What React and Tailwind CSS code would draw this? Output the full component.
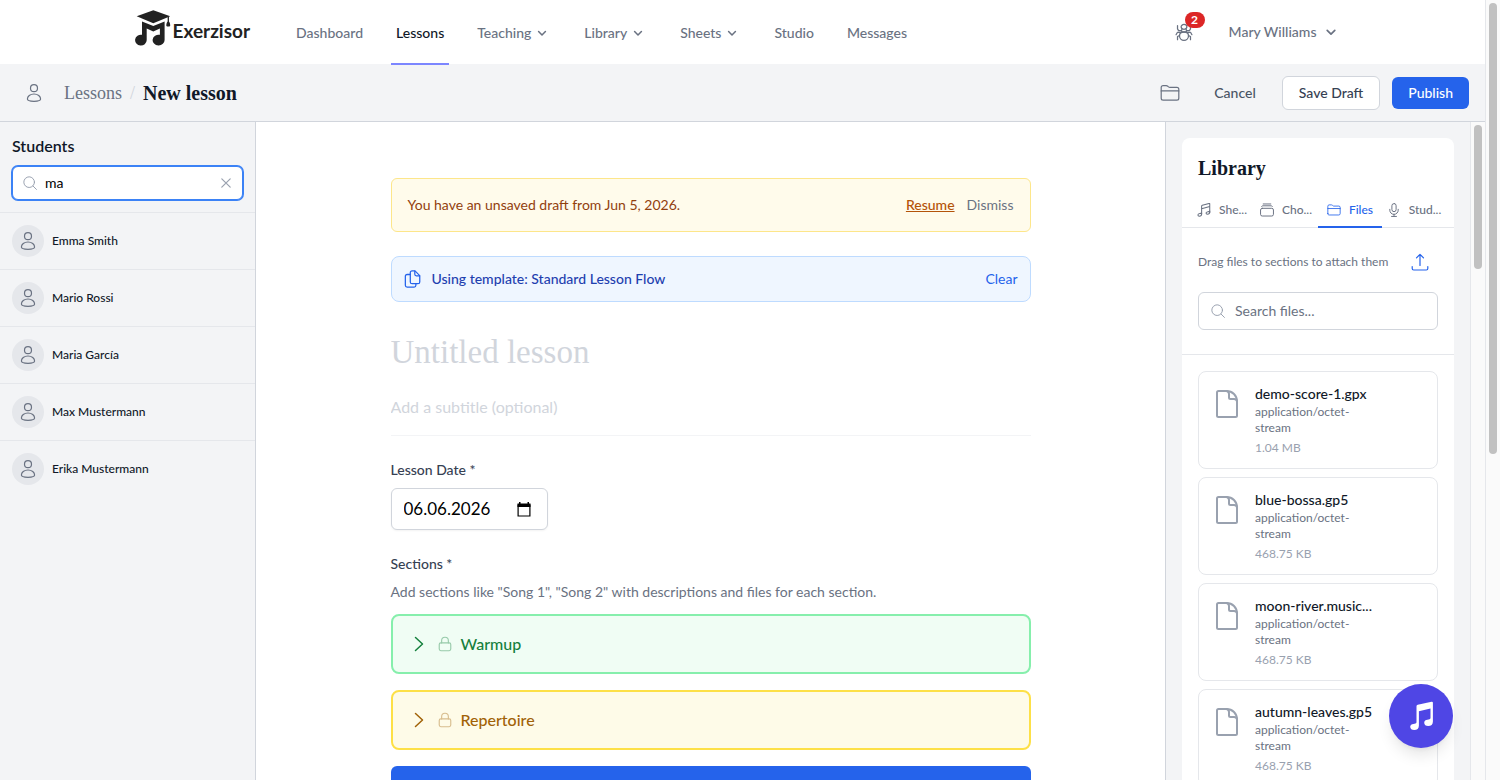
import React, { useState } from 'react';

const students = ['Emma Smith', 'Mario Rossi', 'Maria García', 'Max Mustermann', 'Erika Mustermann'];

const files = [
  { name: 'demo-score-1.gpx', type: 'application/octet-stream', size: '1.04 MB' },
  { name: 'blue-bossa.gp5', type: 'application/octet-stream', size: '468.75 KB' },
  { name: 'moon-river.music...', type: 'application/octet-stream', size: '468.75 KB' },
  { name: 'autumn-leaves.gp5', type: 'application/octet-stream', size: '468.75 KB' }
];

const navItems = [
  { label: 'Dashboard' },
  { label: 'Lessons', active: true },
  { label: 'Teaching', menu: true },
  { label: 'Library', menu: true },
  { label: 'Sheets', menu: true },
  { label: 'Studio' },
  { label: 'Messages' }
];

const serif = "font-['Liberation_Serif',serif]";

function Icon({ className, children, width = 1.2 }) {
  return (
    <svg
      viewBox="0 0 20 20"
      fill="none"
      stroke="currentColor"
      strokeWidth={width}
      strokeLinecap="round"
      strokeLinejoin="round"
      className={`shrink-0 ${className}`}
      aria-hidden="true"
    >
      {children}
    </svg>
  );
}

function PersonIcon({ className }) {
  return (
    <Icon className={className}>
      <circle cx="10" cy="5.2" r="3.5" />
      <path d="M10 11c-3.9 0-6.6 2.5-6.6 5.1 0 1.4 1.2 2.2 6.6 2.2s6.6-.8 6.6-2.2c0-2.6-2.7-5.1-6.6-5.1z" />
    </Icon>
  );
}

function FolderIcon({ className }) {
  return (
    <Icon className={className}>
      <path d="M1.2 15.2V4.6c0-1.2.7-1.9 1.9-1.9h3.1c.7 0 1.1.2 1.6.6l.7.6c.5.4.9.5 1.5.5h6.9c1.2 0 1.9.7 1.9 1.9v8.9c0 1.2-.7 1.9-1.9 1.9H3.1c-1.2 0-1.9-.7-1.9-1.9z" />
      <path d="M1.2 7.9h17.6" />
    </Icon>
  );
}

function SearchIcon({ className }) {
  return (
    <Icon className={className} width={1.4}>
      <circle cx="8.8" cy="8.8" r="7.6" />
      <path d="M14.4 14.4l4.8 4.8" />
    </Icon>
  );
}

function ChevronDown({ className }) {
  return (
    <Icon className={className} width={1.7}>
      <path d="M6.2 8.4l3.8 3.8 3.8-3.8" />
    </Icon>
  );
}

function NotesIcon({ className }) {
  return (
    <Icon className={className} width={1.5}>
      <path d="M6.6 15.8V4.6c0-.7.3-1.1 1-1.3l9.6-2.6c.6-.2 1 .1 1 .7v12M6.600 8.200l11.600-3.200" />
      <path d="M6.600 15.600c0 2-1.200 3.200-3.200 3.200-1.300 0-2.100-.7-2.100-1.800 0-2.100 3.800-1.500 5.300-2.700zM18.200 12.800c0 2-1.200 3.200-3.200 3.200-1.300 0-2.100-.7-2.100-1.800 0-2.100 3.800-1.500 5.300-2.700z" />
    </Icon>
  );
}

function StackIcon({ className }) {
  return (
    <Icon className={className} width={1.4}>
      <rect x="0.8" y="7.6" width="18.4" height="11" rx="2.4" />
      <path d="M2.400 5c.2-.7.700-1 1.400-1h12.400c.7 0 1.200.300 1.400 1M4.600 1.400h10.800" />
    </Icon>
  );
}

function MicIcon({ className }) {
  return (
    <Icon className={className} width={1.4}>
      <rect x="7" y="0.8" width="6" height="11.6" rx="3" />
      <path d="M4 9v1.2a6 6 0 0 0 12 0V9M10 16.2V19M6.5 19.2h7" />
    </Icon>
  );
}

function DocIcon({ className }) {
  return (
    <svg viewBox="0 0 32 32" fill="none" stroke="currentColor" strokeWidth="2" strokeLinejoin="round" className={`shrink-0 ${className}`} aria-hidden="true">
      <path d="M6 4.500c0-1 .5-1.500 1.500-1.500H15.500c6 0 10.500 4.500 10.500 10.500v14c0 1-.5 1.500-1.500 1.500h-17c-1 0-1.500-.5-1.500-1.500z" />
      <path d="M15.500 3c1.800.3 2.500 1.500 2.500 3v3.500c0 1 .5 1.500 1.500 1.500h3.500c1.800 0 3 .8 3 2.500" />
    </svg>
  );
}

function CopyIcon({ className }) {
  return (
    <Icon className={className} width={1.4}>
      <path d="M7 3c0-1.300.7-2 2-2h3.200l5.300 5.300v6.900c0 1.300-.7 2-2 2H9c-1.300 0-2-.7-2-2z" />
      <path d="M12 1.200v3.600c0 1.100.6 1.700 1.700 1.700h3.600" />
      <path d="M7 5H3.500c-1.300 0-2 .7-2 2v9.900c0 1.300.7 2 2 2h7.700c1.300 0 2-.7 2-2v-1.700" />
    </Icon>
  );
}

function UploadIcon({ className }) {
  return (
    <Icon className={className}>
      <path d="M10 13.500V2.500M6.500 5.800L10 2.300l3.500 3.500M2.200 14.500v2c0 .9.6 1.500 1.500 1.500h12.600c.9 0 1.500-.6 1.500-1.500v-2" />
    </Icon>
  );
}

function BugIcon({ className }) {
  return (
    <Icon className={className} width={1.4}>
      <ellipse cx="10" cy="4.300" rx="3.200" ry="2.700" />
      <path d="M7.800 7c-.8.8-.8 2.200 0 3h4.400c.8-.8.8-2.200 0-3" />
      <path d="M10 10c-3.300 0-5 1.800-5 4.200 0 2.700 2.200 5 5 5s5-2.300 5-5c0-2.400-1.700-4.200-5-4.200z" />
      <path d="M7.300 8.500H4L2.800 6.500V2.800M12.700 8.500H16l1.200-2V2.800M6.500 10.500H2.600L1.200 13M13.500 10.500h3.900l1.400 2.500M5 14l-2.200 1v3.500M15 14l2.200 1v3.500" />
    </Icon>
  );
}

function LockIcon({ className }) {
  return (
    <Icon className={className} width={1.4}>
      <rect x="2.8" y="8.6" width="14.4" height="9.8" rx="2" />
      <path d="M5.800 8.600V5.800a4.200 4.200 0 0 1 8.400 0v2.800" />
    </Icon>
  );
}

function Logo() {
  return (
    <a href="#" className="flex items-center text-[#222222]" aria-label="Exerzisor">
      <svg viewBox="0 0 37 36" className="h-9 w-[37px]" aria-hidden="true">
        <path fill="currentColor" d="M18.300.3L35.200 6.200 18.300 13.300 1.700 6.200z" />
        <path fill="none" stroke="currentColor" strokeWidth="1.300" d="M33.300 7v8" />
        <path fill="currentColor" d="M33.300 11.500c1.200 0 2 1.500 1.900 4.500-1.200.8-2.800.8-3.900 0 0-3 .8-4.500 2-4.500z" />
        <path fill="currentColor" d="M7 11.500l11.300 4.600 11.300-4.600v18.300a6 5.400 0 1 1-4.700-5V18.500l-6.600 2.900-6.600-2.900v11.800a5.800 5.400 0 1 1-4.700-5.500z" />
      </svg>
      <span className="ml-px pt-1.5 text-[19px] leading-6 font-bold">Exerzisor</span>
    </a>
  );
}

function Header() {
  return (
    <header className="shrink-0 border-b border-gray-100 bg-white">
      <div className="mx-auto flex h-16 max-w-7xl justify-between px-8">
        <div className="flex">
          <div className="flex items-center pb-2">
            <Logo />
          </div>
          <nav className="ml-[41px] -mb-px flex gap-[23px]">
            {navItems.map(item => (
              <a
                key={item.label}
                href="#"
                className={`flex items-center border-b-2 px-[5px] pt-0.5 text-sm font-medium ${
                  item.active ? 'border-indigo-400 text-gray-900' : 'border-transparent text-gray-500'
                }`}
              >
                {item.label}
                {item.menu && <ChevronDown className="ml-0.5 size-[18px]" />}
              </a>
            ))}
          </nav>
        </div>

        <div className="flex items-center gap-9 pr-2.5 text-gray-500">
          <button type="button" className="relative" aria-label="Bug reports">
            <BugIcon className="size-[18px]" />
            <span className="absolute -top-[11px] -right-3 flex h-4 w-5 items-center justify-center rounded-full bg-[#dc2626] text-xs font-bold text-white">
              2
            </span>
          </button>
          <button type="button" className="flex items-center gap-1 text-sm font-medium">
            Mary Williams
            <ChevronDown className="size-5" />
          </button>
        </div>
      </div>
    </header>
  );
}

function Toolbar() {
  return (
    <div className="flex h-[57px] shrink-0 items-center justify-between border-b border-gray-300 bg-gray-100 px-4">
      <div className="flex items-center">
        <button type="button" className="p-2 text-gray-500" aria-label="Students">
          <PersonIcon className="size-5" />
        </button>
        <div className={`ml-3 flex items-center gap-2 text-lg ${serif}`}>
          <a href="#" className="text-gray-500">Lessons</a>
          <span className="text-gray-300">/</span>
          <h1 className="text-xl font-bold text-gray-900">New lesson</h1>
        </div>
      </div>
      <div className="flex items-center gap-3 text-sm font-medium">
        <button type="button" className="p-2 text-gray-500" aria-label="Library">
          <FolderIcon className="size-5" />
        </button>
        <button type="button" className="px-3.5 py-1.5 text-gray-600">Cancel</button>
        <button type="button" className="rounded-md border border-gray-300 bg-white px-4 py-1.5 text-gray-700">Save Draft</button>
        <button type="button" className="rounded-md bg-[#2563eb] px-4 py-1.5 text-white">Publish</button>
      </div>
    </div>
  );
}

function StudentsPanel() {
  const [search, setSearch] = useState('ma');

  return (
    <aside className="w-64 shrink-0 border-r border-gray-300 bg-gray-100">
      <div className="border-b border-gray-200 p-3">
        <h2 className="font-semibold text-gray-900">Students</h2>
        <div className="mt-2 flex h-[34px] items-center gap-2 rounded-md border border-[#3b82f6] bg-white px-2.5 ring-1 ring-[#3b82f6]">
          <SearchIcon className="size-3.5 text-gray-400" />
          <input
            type="text"
            aria-label="Search students"
            value={search}
            onChange={(e) => setSearch(e.target.value)}
            className="min-w-0 flex-1 text-sm text-black outline-none"
          />
          <button type="button" onClick={() => setSearch('')} className="text-gray-400" aria-label="Clear search">
            <Icon className="size-3" width={2}>
              <path d="M3 3l14 14M17 3L3 17" />
            </Icon>
          </button>
        </div>
      </div>
      <ul className="divide-y divide-gray-200">
        {students.map(name => (
          <li key={name} className="flex items-center gap-2 p-3">
            <span className="flex size-8 items-center justify-center rounded-full bg-gray-200 text-gray-500">
              <PersonIcon className="size-5" />
            </span>
            <span className="text-xs font-medium text-gray-900">{name}</span>
          </li>
        ))}
      </ul>
    </aside>
  );
}

function Section({ title, className }) {
  return (
    <button type="button" className={`flex h-[60px] w-full items-center rounded-lg border-2 px-4 ${className}`}>
      <Icon className="size-5" width={1.5}>
        <path d="M6.5 3.5l7 6.500-7 6.500" />
      </Icon>
      <LockIcon className="ml-2 size-4 opacity-40" />
      <span className="ml-2 font-medium">{title}</span>
    </button>
  );
}

function LessonForm() {
  const [date, setDate] = useState('06.06.2026');

  return (
    <main className="min-w-0 flex-1 overflow-hidden bg-white px-6 pt-14">
      <div className="mx-auto max-w-[640px]">
        {/* Draft notice */}
        <div className="flex items-center justify-between rounded-md border border-[#fde68a] bg-amber-50 p-4 text-sm">
          <p className="text-[#92400e]">You have an unsaved draft from Jun 5, 2026.</p>
          <div className="flex gap-3">
            <button type="button" className="font-medium text-[#b45309] underline">Resume</button>
            <button type="button" className="text-gray-500">Dismiss</button>
          </div>
        </div>

        {/* Template */}
        <div className="mt-6 flex items-center justify-between rounded-lg border border-blue-200 bg-blue-50 p-3 text-sm">
          <div className="flex items-center gap-2.5 text-[#2563eb]">
            <CopyIcon className="size-[18px]" />
            <span className="font-medium text-[#1e40af]">Using template: Standard Lesson Flow</span>
          </div>
          <button type="button" className="text-[#2563eb]">Clear</button>
        </div>

        <div className="mt-8 border-b border-gray-100 pb-4">
          <input
            type="text"
            aria-label="Lesson title"
            placeholder="Untitled lesson"
            className={`block h-[37px] w-full text-[33px] leading-9 outline-none placeholder:text-gray-300 ${serif}`}
          />
          <input
            type="text"
            aria-label="Subtitle"
            placeholder="Add a subtitle (optional)"
            className="mt-6 block h-6 w-full outline-none placeholder:text-gray-300"
          />
        </div>

        <label htmlFor="lesson-date" className="mt-6 block text-sm font-medium text-gray-700">Lesson Date *</label>
        <div className="mt-2 flex h-[42px] w-[157px] items-center justify-between rounded-md border border-gray-300 bg-white pr-4 pl-3 shadow-xs">
          <input
            id="lesson-date"
            type="text"
            value={date}
            onChange={(e) => setDate(e.target.value)}
            className="w-24 text-[17px] text-black outline-none"
          />
          <svg viewBox="0 0 14 15" className="h-[15px] w-3.5" aria-hidden="true">
            <path fill="none" stroke="black" strokeWidth="1.2" d="M1.1 3h11.800v11H1.100z" />
            <path d="M.5 1.500h13V5H.5zM2 0h1.500v2H2zM10.500 0H12v2h-1.500z" />
          </svg>
        </div>

        <h2 className="mt-6 text-sm font-medium text-gray-700">Sections *</h2>
        <p className="mt-2 text-sm text-gray-500">
          Add sections like "Song 1", "Song 2" with descriptions and files for each section.
        </p>
        <div className="mt-3 flex flex-col gap-4">
          <Section title="Warmup" className="border-[#86efac] bg-green-50 text-[#15803d]" />
          <Section title="Repertoire" className="border-[#fde047] bg-[#fefbe8] text-[#a16207]" />
          <button type="button" aria-label="Add section" className="flex h-14 items-center justify-center rounded-md bg-[#2563eb] text-white">
            <Icon className="size-4" width={2}>
              <path d="M10 3v14M3 10h14" />
            </Icon>
          </button>
        </div>
      </div>
    </main>
  );
}

function Tab({ icon, label, active }) {
  return (
    <button
      type="button"
      className={`-mb-px flex flex-1 items-center justify-center gap-2 border-b-2 pt-3 pb-2 text-xs font-medium ${
        active ? 'border-[#2563eb] text-[#2563eb]' : 'border-transparent text-gray-500'
      }`}
    >
      {icon}
      {label}
    </button>
  );
}

function LibraryPanel() {
  return (
    <aside className="flex w-80 shrink-0 border-l border-gray-300 bg-gray-100">
      <div className="min-w-0 flex-1 overflow-hidden p-4">
        <div className="rounded-t-lg bg-white">
          <h2 className={`px-4 pt-4 pb-2 text-xl font-bold text-gray-900 ${serif}`}>Library</h2>
          <div className="flex border-b border-gray-200 px-2">
            <Tab icon={<NotesIcon className="size-3.5" />} label="She..." />
            <Tab icon={<StackIcon className="size-3.5" />} label="Cho..." />
            <Tab icon={<FolderIcon className="size-3.5" />} label="Files" active />
            <Tab icon={<MicIcon className="size-3.5" />} label="Stud..." />
          </div>

          <div className="border-b border-gray-200 px-4 pt-4 pb-6">
            <div className="flex items-center justify-between">
              <p className="text-xs text-gray-500">Drag files to sections to attach them</p>
              <button type="button" className="p-2 text-[#2563eb]" aria-label="Upload file">
                <UploadIcon className="size-5" />
              </button>
            </div>
            <div className="mt-3 flex h-[38px] items-center gap-2.5 rounded-md border border-gray-300 px-3">
              <SearchIcon className="size-3.5 text-gray-400" />
              <input
                type="text"
                aria-label="Search files"
                placeholder="Search files..."
                className="min-w-0 flex-1 text-sm outline-none placeholder:text-gray-500"
              />
            </div>
          </div>

          <ul className="flex flex-col gap-2 p-4">
            {files.map(file => (
              <li key={file.name} className="flex gap-3 rounded-lg border border-gray-200 p-3">
                <DocIcon className="mt-1 size-8 text-gray-400" />
                <div className="min-w-0 flex-1 pr-12">
                  <p className="text-sm font-medium whitespace-nowrap text-gray-900">{file.name}</p>
                  <p className="text-xs text-gray-500">{file.type}</p>
                  <p className="mt-1 text-xs text-gray-400">{file.size}</p>
                </div>
              </li>
            ))}
          </ul>
        </div>
      </div>
      <div className="flex w-[15px] shrink-0 justify-center border-l border-gray-200 bg-[#fafafa] pt-[3px]">
        <div className="h-36 w-2 rounded-full bg-[#c1c1c1]" />
      </div>
    </aside>
  );
}

export default function App() {
  return (
    <div className="flex h-screen overflow-hidden font-['Lato',sans-serif]">
      <div className="flex min-w-0 flex-1 flex-col">
        <Header />
        <Toolbar />
        <div className="flex min-h-0 flex-1">
          <StudentsPanel />
          <LessonForm />
          <LibraryPanel />
        </div>
      </div>
      <div className="flex w-[15px] shrink-0 justify-center border-l border-gray-200 bg-[#fafafa] pt-[3px]">
        <div className="h-[58%] w-2 rounded-full bg-[#c1c1c1]" />
      </div>

      <button
        type="button"
        aria-label="Open music tools"
        className="fixed right-[47px] bottom-8 flex size-16 items-center justify-center rounded-full bg-[#4f46e5] text-white shadow-lg"
      >
        <svg viewBox="0 0 32 32" className="size-8" fill="currentColor" aria-hidden="true">
          <path d="M11.500 6.300c0-.8.4-1.300 1.200-1.500l13.900-3c.8-.2 1.300.2 1.300 1v18.600c0 2.900-1.800 4.600-4.700 4.600-2.400 0-4-1.300-4-3.300 0-3.900 6.300-2.300 6.300-4.600v-9.500l-11.600 2.700v14.200c0 2.900-1.800 4.600-4.700 4.600-2.400 0-4-1.300-4-3.300 0-3.900 6.300-2.300 6.300-4.600z" />
        </svg>
      </button>
    </div>
  );
}
